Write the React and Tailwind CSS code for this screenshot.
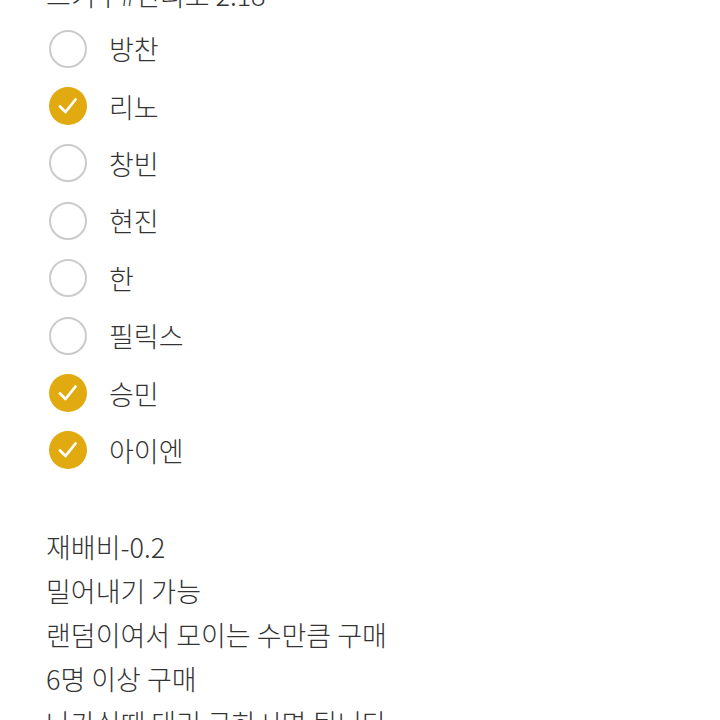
const options = [
  { name: "방찬", checked: false },
  { name: "리노", checked: true },
  { name: "창빈", checked: false },
  { name: "현진", checked: false },
  { name: "한", checked: false },
  { name: "필릭스", checked: false },
  { name: "승민", checked: true },
  { name: "아이엔", checked: true },
];

const notes = [
  "재배비-0.2",
  "밀어내기 가능",
  "랜덤이여서 모이는 수만큼 구매",
  "6명 이상 구매",
  "나가실때 대리 구하시면 됩니다",
];

function Check({ checked }) {
  if (checked) {
    return (
      <div className="w-[38px] h-[38px] shrink-0 rounded-full bg-[#e1aa10] flex items-center justify-center">
        <svg width="24" height="24" viewBox="0 0 24 24" fill="none">
          <path d="M4 12.5 L9.5 18 L19.5 5.5" stroke="white" strokeWidth="2.8" strokeLinecap="round" strokeLinejoin="round" />
        </svg>
      </div>
    );
  }
  return <div className="w-[38px] h-[38px] shrink-0 rounded-full border-[2.5px] border-[#cbcbcb] bg-white" />;
}

export default function App() {
  return (
    <div
      className="w-[720px] h-[720px] overflow-hidden bg-white text-[#333333] font-light"
      style={{ fontFamily: '"Noto Sans CJK KR", "Noto Sans", sans-serif' }}
    >
      <div className="pl-[46px] mt-[-27px] h-[44px] text-[27px] leading-[44px] whitespace-nowrap">스키주#전리오 2.18</div>

      <div className="mt-[3px] pl-[49px]">
        {options.map((o) => (
          <div key={o.name} className="flex items-center h-[57.4px]">
            <Check checked={o.checked} />
            <span className="ml-[22px] text-[27px] leading-none">{o.name}</span>
          </div>
        ))}
      </div>

      <div className="mt-[46px] pl-[46px] text-[27px]">
        {notes.map((n) => (
          <div key={n} className="h-[44px] leading-[44px] whitespace-nowrap">{n}</div>
        ))}
      </div>
    </div>
  );
}
